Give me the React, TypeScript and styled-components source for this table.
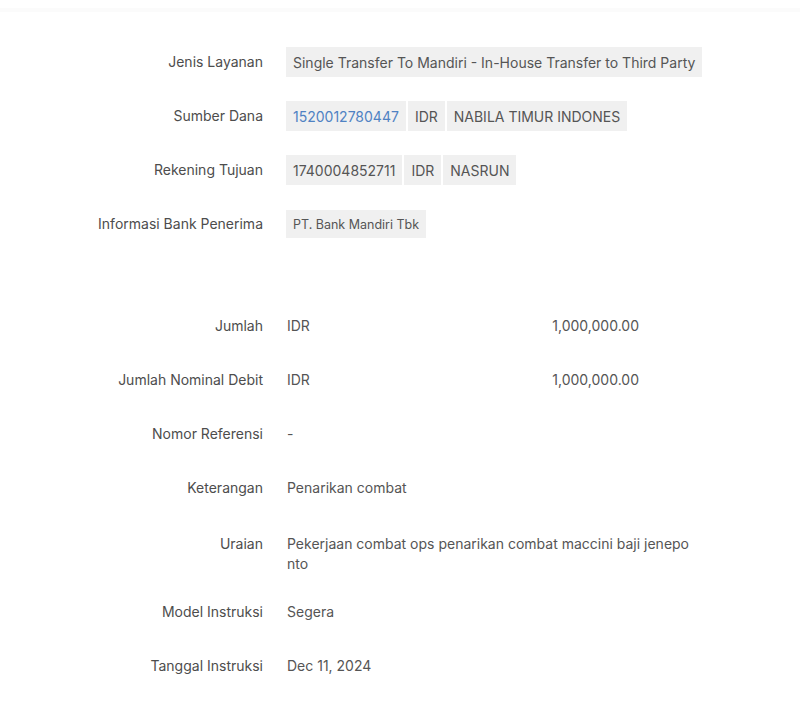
import React from 'react';
import styled, { createGlobalStyle } from "styled-components";

const GlobalStyle = createGlobalStyle`
  html, body {
    margin: 0;
    padding: 0;
    background: #ffffff;
  }

  body {
    font-family: Inter, "Noto Sans", "Liberation Sans", sans-serif;
    font-size: 14px;
    color: #555555;
  }
`

const Page = styled.div`
  width: 800px;
  min-height: 710px;
  padding-top: 8px;
  box-sizing: border-box;
`

const TopStrip = styled.div`
  height: 4px;
  background: #fbfbfb;
`

const Details = styled.div`
  display: flex;
  flex-direction: column;
  padding-top: 23px;
`

const Row = styled.div<{ $multiline?: boolean }>`
  display: grid;
  grid-template-columns: 263px 1fr;
  column-gap: 23px;
  align-items: ${p => (p.$multiline ? "start" : "center")};
  min-height: 54px;
  box-sizing: border-box;
  padding: ${p => (p.$multiline ? "19px 0 11px" : "0")};
`

const Label = styled.div`
  text-align: right;
  line-height: 20px;
  color: #4d4d4d;
  white-space: nowrap;
`

const BoxGroup = styled.div`
  display: flex;
  gap: 2px;
`

const Box = styled.span<{ $link?: boolean; $small?: boolean }>`
  display: inline-flex;
  align-items: center;
  height: ${p => (p.$small ? "28px" : "30px")};
  padding: 0 7px;
  background: #f0f0f0;
  font-size: ${p => (p.$small ? "12.5px" : "14px")};
  color: ${p => (p.$link ? "#4f82c3" : "#555555")};
  white-space: nowrap;
`

const Plain = styled.div`
  padding-left: 1px;
  line-height: 20px;
  color: #555555;
  max-width: 404px;
  word-break: break-all;
`

const Amount = styled.div`
  display: flex;
  justify-content: space-between;
  width: 352px;
  padding-left: 1px;
  line-height: 20px;
`

const SectionGap = styled.div`
  height: 48px;
`

type Field = { label: string; value: React.ReactNode; multiline?: boolean };

const transferFields: Field[] = [
  {
    label: "Jenis Layanan",
    value: (
      <BoxGroup>
        <Box>Single Transfer To Mandiri - In-House Transfer to Third Party</Box>
      </BoxGroup>
    ),
  },
  {
    label: "Sumber Dana",
    value: (
      <BoxGroup>
        <Box $link>1520012780447</Box>
        <Box>IDR</Box>
        <Box>NABILA TIMUR INDONES</Box>
      </BoxGroup>
    ),
  },
  {
    label: "Rekening Tujuan",
    value: (
      <BoxGroup>
        <Box>1740004852711</Box>
        <Box>IDR</Box>
        <Box>NASRUN</Box>
      </BoxGroup>
    ),
  },
  {
    label: "Informasi Bank Penerima",
    value: (
      <BoxGroup>
        <Box $small>PT. Bank Mandiri Tbk</Box>
      </BoxGroup>
    ),
  },
];

const amountFields: Field[] = [
  {
    label: "Jumlah",
    value: (
      <Amount>
        <span>IDR</span>
        <span>1,000,000.00</span>
      </Amount>
    ),
  },
  {
    label: "Jumlah Nominal Debit",
    value: (
      <Amount>
        <span>IDR</span>
        <span>1,000,000.00</span>
      </Amount>
    ),
  },
  { label: "Nomor Referensi", value: <Plain>-</Plain> },
  { label: "Keterangan", value: <Plain>Penarikan combat</Plain> },
  {
    label: "Uraian",
    value: <Plain>Pekerjaan combat ops penarikan combat maccini baji jeneponto</Plain>,
    multiline: true,
  },
  { label: "Model Instruksi", value: <Plain>Segera</Plain> },
  { label: "Tanggal Instruksi", value: <Plain>Dec 11, 2024</Plain> },
];

function FieldRows({ fields }: { fields: Field[] }) {
  return (
    <>
      {fields.map(f => (
        <Row key={f.label} $multiline={f.multiline}>
          <Label>{f.label}</Label>
          {f.value}
        </Row>
      ))}
    </>
  );
}

export default function App() {
  return (
    <Page>
      <GlobalStyle />
      <TopStrip />
      <Details>
        <FieldRows fields={transferFields} />
        <SectionGap />
        <FieldRows fields={amountFields} />
      </Details>
    </Page>
  );
}
